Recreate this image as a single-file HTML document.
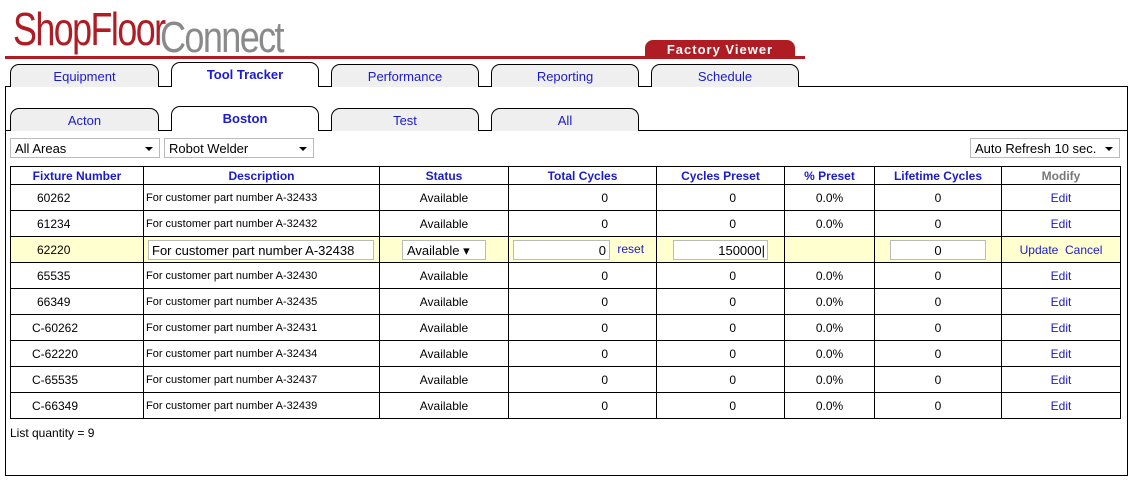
<!DOCTYPE html>
<html><head><style>
body{margin:0;width:1134px;height:483px;background:#fff;font-family:"Liberation Sans",Arial,sans-serif;position:relative;overflow:hidden}
.abs{position:absolute}
.tab{position:absolute;height:23px;border:1px solid #000;border-bottom:none;border-radius:9px 9px 0 0;background:#efefef;color:#1a1ad0;font-size:13px;text-align:center;line-height:24px;box-sizing:border-box}
.tab.act{background:#fff;font-weight:bold;height:25px}
.sel{position:absolute;height:20px;border:1px solid #bbb;font-size:13px;line-height:19px;padding-left:4px;box-sizing:border-box;background:#fff}
.sel:after{content:"";position:absolute;right:6px;top:8px;border:4px solid transparent;border-top:4px solid #000;border-bottom:none}
table{position:absolute;left:10px;top:166px;width:1111px;border-collapse:collapse;font-size:12px}
td,th{border:1px solid #000;padding:0;text-align:center;height:25px}
th{height:17px;color:#1a1ad0;font-size:12px}
td.d{text-align:left;font-size:11px;padding-left:2px}
td.r{text-align:right;padding-right:48px}
td.f{text-align:left;padding-left:26px}
a{color:#1a1ad0;text-decoration:none}
tr.e td{background:#ffffd0}
.inp{border:1px solid #bbb;background:#fff;height:20px;box-sizing:border-box;font-size:13px;line-height:19px;display:inline-block;vertical-align:middle}
.lg{position:absolute;white-space:nowrap;transform-origin:left top;font-family:"Liberation Sans Narrow","Liberation Sans",sans-serif;letter-spacing:-2px}
</style></head><body>
<div class="lg" style="left:13px;top:2px;font-size:46px;color:#b01c24;transform:scaleX(0.78)">ShopFloor</div>
<div class="lg" style="left:160px;top:13px;font-size:44px;color:#8a8a8a;transform:scaleX(0.82)">Connect</div>
<div class="abs" style="left:5px;top:56px;width:800px;height:3px;background:#b01c24"></div>
<div class="abs" style="left:645px;top:40px;width:150px;height:17px;background:#b01c24;border-radius:8px 8px 0 0;color:#fff;font-weight:bold;font-size:13px;line-height:19px;text-align:center;letter-spacing:1px">Factory Viewer</div>
<div class="abs" style="left:5px;top:86px;width:1123px;height:390px;border:1px solid #000;box-sizing:border-box"></div>
<div class="tab" style="left:10px;top:64px;width:149px">Equipment</div>
<div class="tab act" style="left:171px;top:62px;width:148px">Tool Tracker</div>
<div class="tab" style="left:331px;top:64px;width:148px">Performance</div>
<div class="tab" style="left:491px;top:64px;width:148px">Reporting</div>
<div class="tab" style="left:651px;top:64px;width:148px">Schedule</div>
<div class="abs" style="left:6px;top:130px;width:1121px;height:1px;background:#000"></div>
<div class="tab" style="left:10px;top:108px;width:149px">Acton</div>
<div class="tab act" style="left:171px;top:106px;width:148px;height:25px">Boston</div>
<div class="tab" style="left:331px;top:108px;width:148px">Test</div>
<div class="tab" style="left:491px;top:108px;width:148px">All</div>
<div class="sel" style="left:10px;top:138px;width:150px">All Areas</div>
<div class="sel" style="left:164px;top:138px;width:150px">Robot Welder</div>
<div class="sel" style="left:970px;top:138px;width:150px">Auto Refresh 10 sec.</div>
<table>
<tr><th style="width:132px">Fixture Number</th><th style="width:235px">Description</th><th style="width:128px">Status</th><th style="width:147px">Total Cycles</th><th style="width:127px">Cycles Preset</th><th style="width:89px">% Preset</th><th style="width:126px">Lifetime Cycles</th><th style="color:#777">Modify</th></tr>
<tr><td class="f">60262</td><td class="d">For customer part number A-32433</td><td>Available</td><td class="r">0</td><td class="r">0</td><td>0.0%</td><td>0</td><td><a>Edit</a></td></tr>
<tr><td class="f">61234</td><td class="d">For customer part number A-32432</td><td>Available</td><td class="r">0</td><td class="r">0</td><td>0.0%</td><td>0</td><td><a>Edit</a></td></tr>
<tr class="e"><td class="f">62220</td><td class="d"><span class="inp" style="width:226px;padding-left:3px;margin-left:2px">For customer part number A-32438</span></td><td><span class="inp" style="width:84px;text-align:left;padding-left:4px">Available ▾</span></td><td style="text-align:left"><span class="inp" style="width:97px;text-align:right;padding-right:3px;margin-left:4px">0</span> <a style="padding-left:4px">reset</a></td><td><span class="inp" style="width:95px;text-align:right;padding-right:2px">150000|</span></td><td></td><td><span class="inp" style="width:96px">0</span></td><td><a>Update</a>&nbsp; <a>Cancel</a></td></tr>
<tr><td class="f">65535</td><td class="d">For customer part number A-32430</td><td>Available</td><td class="r">0</td><td class="r">0</td><td>0.0%</td><td>0</td><td><a>Edit</a></td></tr>
<tr><td class="f">66349</td><td class="d">For customer part number A-32435</td><td>Available</td><td class="r">0</td><td class="r">0</td><td>0.0%</td><td>0</td><td><a>Edit</a></td></tr>
<tr><td class="f" style="padding-left:21px">C-60262</td><td class="d">For customer part number A-32431</td><td>Available</td><td class="r">0</td><td class="r">0</td><td>0.0%</td><td>0</td><td><a>Edit</a></td></tr>
<tr><td class="f" style="padding-left:21px">C-62220</td><td class="d">For customer part number A-32434</td><td>Available</td><td class="r">0</td><td class="r">0</td><td>0.0%</td><td>0</td><td><a>Edit</a></td></tr>
<tr><td class="f" style="padding-left:21px">C-65535</td><td class="d">For customer part number A-32437</td><td>Available</td><td class="r">0</td><td class="r">0</td><td>0.0%</td><td>0</td><td><a>Edit</a></td></tr>
<tr><td class="f" style="padding-left:21px">C-66349</td><td class="d">For customer part number A-32439</td><td>Available</td><td class="r">0</td><td class="r">0</td><td>0.0%</td><td>0</td><td><a>Edit</a></td></tr>
</table>
<div class="abs" style="left:10px;top:426px;font-size:12px">List quantity = 9</div>
</body></html>
